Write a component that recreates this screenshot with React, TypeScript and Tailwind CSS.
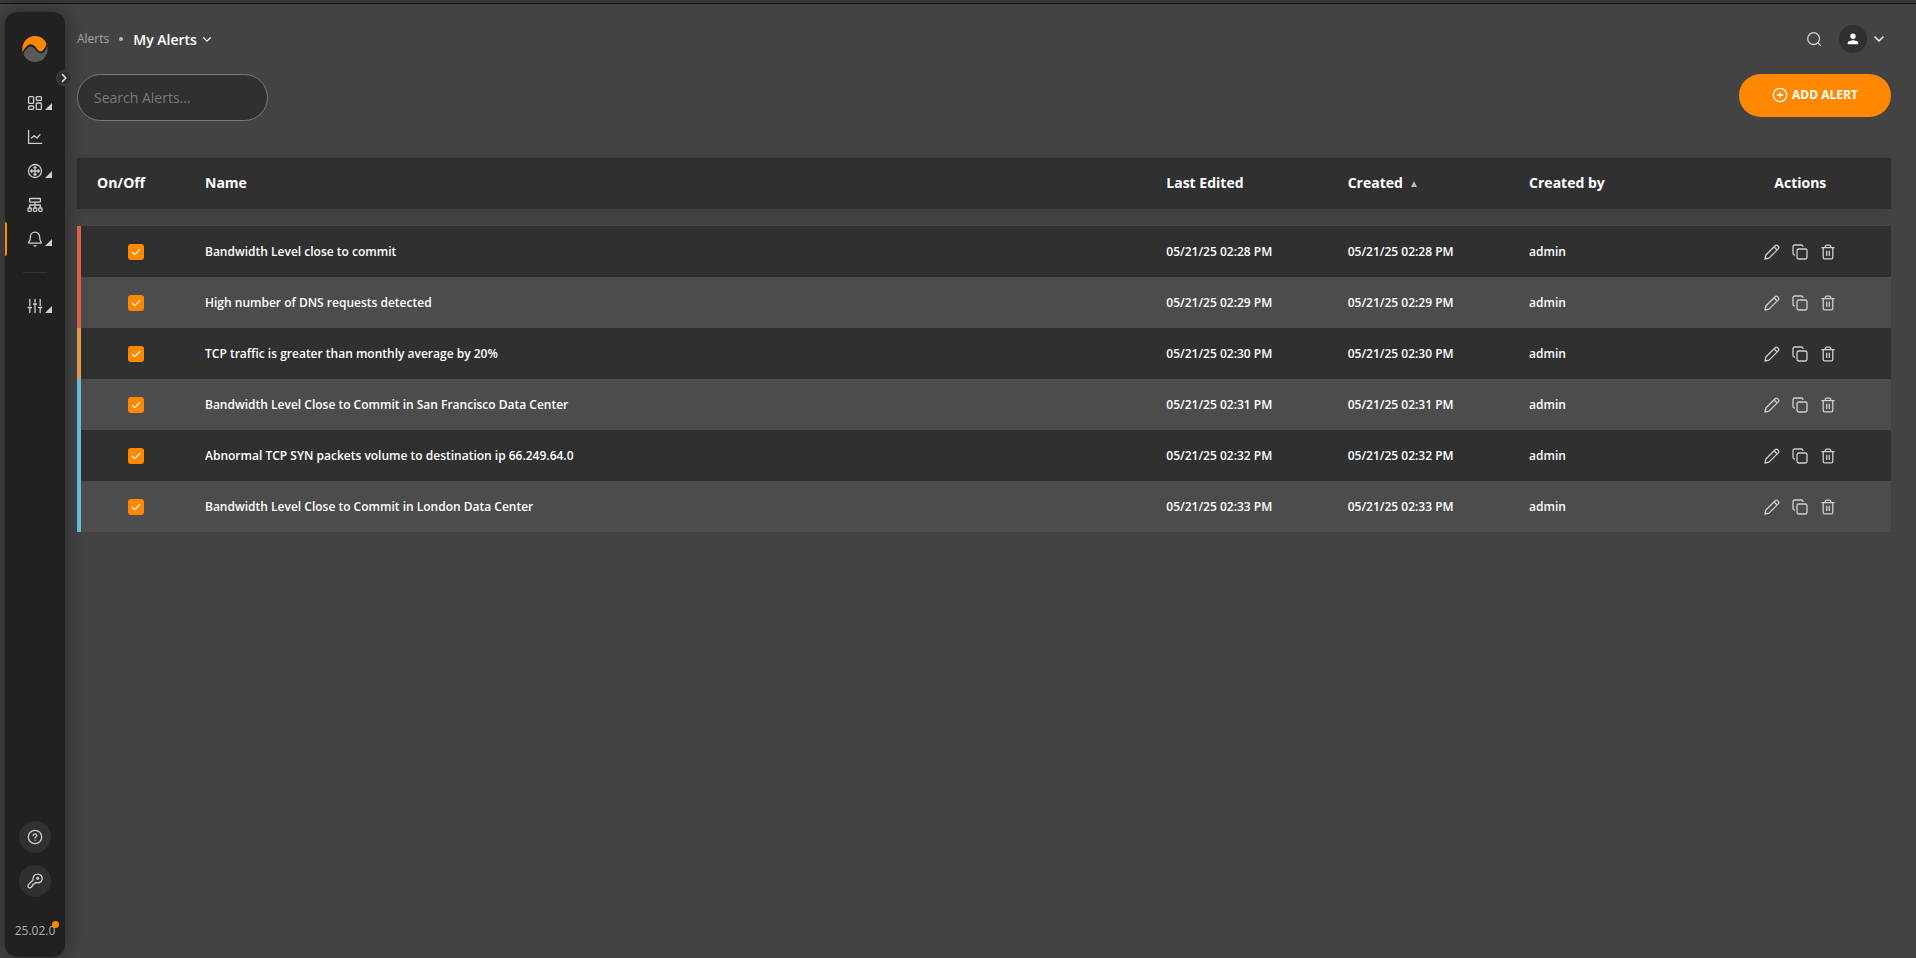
import React, { useState } from "react";

type IconProps = { className?: string; children: React.ReactNode };

function Icon({ className = "size-4", children }: IconProps) {
  return (
    <svg
      viewBox="0 0 16 16"
      className={className}
      fill="none"
      stroke="currentColor"
      strokeWidth="1.3"
      strokeLinecap="round"
      strokeLinejoin="round"
      aria-hidden="true"
    >
      {children}
    </svg>
  );
}

function Logo() {
  return (
    <svg viewBox="0 0 26 26" className="size-[26px]" aria-hidden="true">
      <path
        d="M.6 16.500C-1 7 5 0 13 0c5.500 0 10 3.400 11.600 8-1.300 3-3.300 7.300-6.100 7.500C15.700 15.700 13.500 8.300 8.700 8.300 5.200 8.300 2.500 12 .6 16.500z"
        fill="#ff8800"
      />
      <path
        d="M1.500 18C3.300 13.800 6 10.500 8.700 10.500c3.800 0 6.200 7.200 10.200 6.900 3-.2 5-3.500 6.600-7.400C26.900 19 21 26 13.300 26 7.500 26 3 22.500 1.500 18z"
        fill="#5a5a5a"
      />
    </svg>
  );
}

const navIcons = {
  dashboard: (
    <>
      <rect x="1.600" y="1.600" width="5" height="6.800" rx="1" />
      <rect x="9.200" y="1.600" width="5.200" height="3.800" rx="1" />
      <rect x="1.600" y="11" width="5" height="3.400" rx="1" />
      <rect x="9.200" y="8" width="5.200" height="6.400" rx="1" />
    </>
  ),
  chart: (
    <>
      <path d="M1.600 1.500v12.900h13" />
      <path d="M4.500 9l2.700-2.300 2.800 2.300 3-3.200" />
    </>
  ),
  network: (
    <>
      <circle cx="8" cy="8" r="6.500" />
      <path d="M8 3.600v8.800M3.600 8h8.800M6.700 4.900L8 3.600l1.300 1.300M6.700 11.100L8 12.400l1.300-1.300M4.900 6.700L3.600 8l1.300 1.300M11.100 6.700L12.400 8l-1.300 1.300" />
    </>
  ),
  topology: (
    <>
      <rect x="2.600" y="1.500" width="10.800" height="3.600" rx="0.500" />
      <path d="M8 5.200v5.600M2.700 10.800V8h10.600v2.800" />
      <rect x="1" y="11" width="3.300" height="3.300" rx="0.800" />
      <rect x="6.400" y="11" width="3.300" height="3.300" rx="0.800" />
      <rect x="11.700" y="11" width="3.300" height="3.300" rx="0.800" />
    </>
  ),
  bell: (
    <>
      <path d="M8 1.200c-2.700 0-4.600 2-4.600 4.600 0 3.200-.7 4.300-1.500 5.200-.5.600-.2 1.200.4 1.200h11.400c.6 0 .9-.6.4-1.200-.8-.9-1.500-2-1.500-5.200 0-2.600-1.900-4.600-4.600-4.600z" />
      <path d="M7 14.700c.6.400 1.400.4 2 0" />
    </>
  ),
  sliders: (
    <path d="M2.800 1.500v6M1.200 9.500h3.200M2.800 9.500v5M8 1.500v2.700M6.500 6h3M8 6.500v8M13.200 1.500v6M11.600 9.500h3.200M13.200 9.500v5" />
  ),
};

function NavItem({
  icon,
  label,
  menu,
  active,
}: {
  icon: keyof typeof navIcons;
  label: string;
  menu?: boolean;
  active?: boolean;
}) {
  return (
    <a
      href="#"
      aria-label={label}
      className="relative flex h-[34px] w-full items-center justify-center text-[#cfcfd3]"
    >
      {active && <span className="absolute inset-y-0 left-0 w-[2px] rounded-r bg-[#ff8800]" />}
      <Icon>{navIcons[icon]}</Icon>
      {menu && (
        <svg viewBox="0 0 6 6" className="absolute right-[13px] bottom-[10px] size-[7px]" aria-hidden="true">
          <path d="M6 0v6H0z" fill="#cfcfd3" />
        </svg>
      )}
    </a>
  );
}

function Sidebar() {
  return (
    <aside className="relative mt-[8px] mb-px ml-[5px] flex w-[60px] shrink-0 flex-col items-center rounded-xl bg-[#212121] pt-6 pb-4 shadow-[0_0_20px_rgba(0,0,0,0.4)]">
      <Logo />
      <button
        type="button"
        aria-label="Expand sidebar"
        className="absolute top-[58px] -right-[7px] flex size-4 items-center justify-center rounded-full border border-[#444444] bg-[#303030] text-[#dddddd]"
      >
        <Icon className="size-3 shrink-0">
          <path d="M6 3.500L10.500 8 6 12.500" strokeWidth="1.900" />
        </Icon>
      </button>
      <nav className="mt-[24px] flex w-full flex-col items-center">
        <NavItem icon="dashboard" label="Dashboards" menu />
        <NavItem icon="chart" label="Analytics" />
        <NavItem icon="network" label="Network" menu />
        <NavItem icon="topology" label="Topology" />
        <NavItem icon="bell" label="Alerts" menu active />
        <hr className="my-4 w-6 border-[#333333]" />
        <NavItem icon="sliders" label="Settings" menu />
      </nav>
      <div className="mt-auto flex flex-col items-center gap-3">
        <button type="button" aria-label="Help" className="flex size-8 items-center justify-center rounded-full bg-[#303030] text-[#cfcfd3]">
          <Icon>
            <circle cx="8" cy="8" r="6.700" />
            <path d="M6.300 6.600c0-2.400 3.500-2.300 3.500 0 0 1.200-1.800 1.400-1.800 2.400M8 11.200v.1" />
          </Icon>
        </button>
        <button type="button" aria-label="License" className="flex size-8 items-center justify-center rounded-full bg-[#303030] text-[#cfcfd3]">
          <Icon>
            <path d="M10.400 1.200a4.300 4.300 0 0 0-4.100 5.600L1.500 11.600c-.8.800-.8 2 0 2.700.8.700 1.900.6 2.600-.1l1.600-1.700.2-1.300 1.300-.2 1.700-1.700a4.300 4.300 0 1 0 1.500-8.100z" />
            <circle cx="10.700" cy="5.300" r="1" />
          </Icon>
        </button>
      </div>
      <div className="relative mt-6 text-xs leading-5 text-[#b0b0b0]">
        25.02.0
        <span className="absolute top-0 -right-1 size-[7px] rounded-full bg-[#ff8800]" />
      </div>
    </aside>
  );
}

const alerts = [
  { name: "Bandwidth Level close to commit", date: "05/21/25 02:28 PM", border: "border-[#e4634d]" },
  { name: "High number of DNS requests detected", date: "05/21/25 02:29 PM", border: "border-[#e4634d]" },
  { name: "TCP traffic is greater than monthly average by 20%", date: "05/21/25 02:30 PM", border: "border-[#eb9f50]" },
  { name: "Bandwidth Level Close to Commit in San Francisco Data Center", date: "05/21/25 02:31 PM", border: "border-[#67c2e4]" },
  { name: "Abnormal TCP SYN packets volume to destination ip 66.249.64.0", date: "05/21/25 02:32 PM", border: "border-[#67c2e4]" },
  { name: "Bandwidth Level Close to Commit in London Data Center", date: "05/21/25 02:33 PM", border: "border-[#67c2e4]" },
];

function RowActions({ name }: { name: string }) {
  return (
    <div className="flex items-center justify-center gap-3 text-[#cfcfd3]">
      <button type="button" aria-label={`Edit ${name}`}>
        <Icon>
          <path d="M1 15l.9-4L11.400 1.500a1.400 1.400 0 0 1 2 0l1.100 1.100a1.400 1.400 0 0 1 0 2L5 14.100 1 15zM10.700 3.200c.3 1.200 1 1.900 2.100 2.100" />
        </Icon>
      </button>
      <button type="button" aria-label={`Duplicate ${name}`}>
        <Icon>
          <rect x="5" y="5" width="10" height="10" rx="1.800" />
          <path d="M2.400 11A1.700 1.700 0 0 1 1 9.300V2.800C1 1.800 1.800 1 2.800 1h6.500c.8 0 1.500.5 1.700 1.300" />
        </Icon>
      </button>
      <button type="button" aria-label={`Delete ${name}`}>
        <Icon>
          <path d="M2 3.700h12M3.200 3.700v9.500c0 1 .7 1.600 1.600 1.600h6.400c.9 0 1.600-.6 1.600-1.600V3.700M5.300 3.500V2.600c0-.8.600-1.400 1.400-1.400h2.600c.8 0 1.400.6 1.400 1.400v.9M6.700 7.200v4.200M9.300 7.200v4.200" />
        </Icon>
      </button>
    </div>
  );
}

function AlertToggle({ name }: { name: string }) {
  const [on, setOn] = useState(true);
  return (
    <label className="ml-[47px] grid size-4 place-items-center">
      <input
        type="checkbox"
        aria-label={`Enable ${name}`}
        checked={on}
        onChange={() => setOn(!on)}
        className="col-start-1 row-start-1 size-4 appearance-none rounded-[3px] bg-[#555555] checked:bg-[#ff8800]"
      />
      {on && (
        <Icon className="pointer-events-none z-10 col-start-1 row-start-1 size-4 text-white">
          <path d="M4.300 8.300l2.400 2.400 5.100-5.200" strokeWidth="1.200" />
        </Icon>
      )}
    </label>
  );
}

function AlertsTable() {
  return (
    <table className="mt-[37px] w-full table-fixed border-separate border-spacing-0 text-left text-white">
      <thead>
        <tr className="h-[51px] bg-[#303030] text-sm font-bold shadow-[0_0_8px_rgba(0,0,0,0.12)]">
          <th className="w-[108px] pb-0.5 pl-5">On/Off</th>
          <th className="pb-0.5 pl-5">Name</th>
          <th className="w-[10%] pb-0.5 pl-[19px]">Last Edited</th>
          <th className="w-[10%] pb-0.5 pl-[19px]" aria-sort="ascending">
            Created
            <svg viewBox="0 0 6 6" className="ml-2 inline size-[6px]" aria-hidden="true">
              <path d="M3 0l3 6H0z" fill="#bbbbbb" />
            </svg>
          </th>
          <th className="w-[11%] pb-0.5 pl-[19px]">Created by</th>
          <th className="w-[10%] pb-0.5 text-center">Actions</th>
        </tr>
      </thead>
      <tbody className="text-xs font-semibold">
        <tr aria-hidden="true" className="h-[17px]">
          <td colSpan={6} />
        </tr>
        {alerts.map((a) => (
          <tr key={a.name} className="h-[51px] even:bg-[#303030] odd:bg-[#4c4c4c]">
            <td className={`border-l-4 ${a.border}`}>
              <AlertToggle name={a.name} />
            </td>
            <td className="pl-5">{a.name}</td>
            <td className="pl-[19px]">{a.date}</td>
            <td className="pl-[19px]">{a.date}</td>
            <td className="pl-[19px]">admin</td>
            <td>
              <RowActions name={a.name} />
            </td>
          </tr>
        ))}
      </tbody>
    </table>
  );
}

export default function App() {
  return (
    <div className="flex min-h-screen flex-col bg-[#434343] font-['Open_Sans',sans-serif]">
      <div className="h-1 border-b border-[#161616] bg-[#383838]" />
      <div className="flex grow">
        <Sidebar />
        <main className="min-w-0 grow pr-[25px] pl-3">
          <header className="mt-[21px] flex h-7 items-center">
            <a href="#" className="text-xs text-[#a6a6a9]">Alerts</a>
            <span className="mx-[10px] size-1 rounded-full bg-[#b5b5b5]" />
            <button type="button" className="flex items-center gap-1 pt-0.5 text-sm font-semibold text-white">
              My Alerts
              <Icon className="size-3">
                <path d="M3.500 5L8 9.500 12.500 5" strokeWidth="1.600" />
              </Icon>
            </button>
            <button type="button" aria-label="Search" className="ml-auto text-[#cfcfd3]">
              <Icon>
                <circle cx="7.600" cy="7.600" r="5.900" />
                <path d="M12 12l2.400 2.400" />
              </Icon>
            </button>
            <button type="button" aria-label="Account" className="mr-1 ml-[17px] flex items-center gap-1 text-white">
              <span className="flex size-7 items-center justify-center rounded-full bg-[#303030]">
                <svg viewBox="0 0 16 16" className="size-4" fill="currentColor" aria-hidden="true">
                  <circle cx="8" cy="5.300" r="2.700" />
                  <path d="M2.700 13.300v-1.200c0-2 3.500-2.900 5.300-2.900s5.300.9 5.300 2.900v1.200z" />
                </svg>
              </span>
              <Icon>
                <path d="M4 6l4 4 4-4" strokeWidth="1.500" />
              </Icon>
            </button>
          </header>
          <div className="mt-[21px] flex items-start justify-between">
            <input
              type="search"
              aria-label="Search Alerts"
              placeholder="Search Alerts..."
              className="h-[47px] w-[191px] rounded-full border border-[#7a7a7a] bg-[#303030] px-4 text-sm text-white placeholder:text-[#7a7a7a]"
            />
            <button
              type="button"
              className="flex h-[43px] w-[152px] items-center justify-center gap-1 rounded-full bg-[#ff8800] pb-0.5 text-xs font-bold text-white"
            >
              <Icon>
                <circle cx="8" cy="8" r="6.700" />
                <path d="M8 5.200v5.600M5.200 8h5.600" />
              </Icon>
              ADD ALERT
            </button>
          </div>
          <AlertsTable />
        </main>
      </div>
    </div>
  );
}
